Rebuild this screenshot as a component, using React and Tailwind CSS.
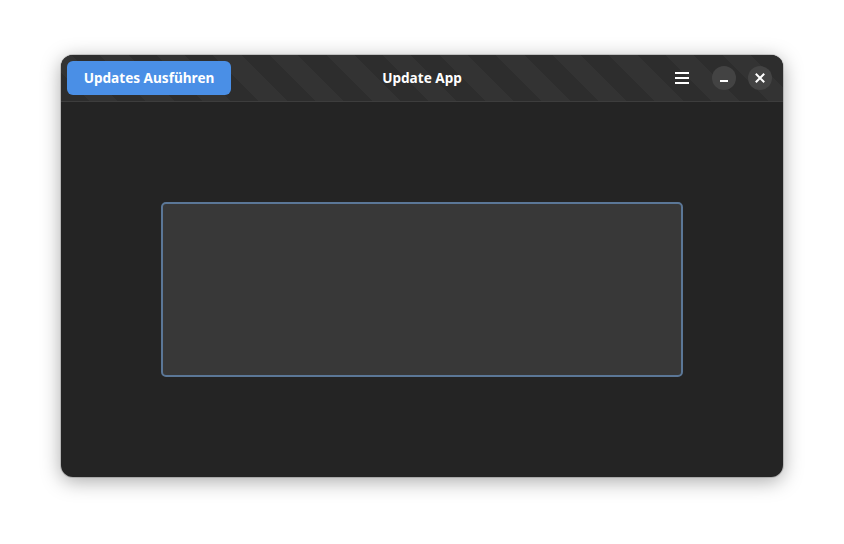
export default function App() {
  return (
    <div className="w-[844px] h-[544px] bg-white pt-[55px] pl-[61px]" style={{ fontFamily: '"Noto Sans", sans-serif' }}>
      <div className="w-[722px] h-[422px] rounded-[12px] overflow-hidden bg-[#242424] flex flex-col shadow-[0_4px_20px_rgba(0,0,0,0.35),0_0_0_1px_rgba(0,0,0,0.15)]">
        <div className="h-[47px] shrink-0 flex items-center px-[6px] border-b border-[#3d3d3d] bg-[#2e2e2e] bg-[repeating-linear-gradient(45deg,#2d2d2d_0px,#2d2d2d_20px,#333333_20px,#333333_40px)] relative">
          <button className="h-[34px] w-[164px] rounded-[6px] bg-[#4a8fe6] text-white text-[13.6px] font-bold flex items-center justify-center">
            Updates Ausführen
          </button>
          <div className="absolute left-0 right-0 top-0 bottom-0 flex items-center justify-center pointer-events-none">
            <span className="text-white text-[13.6px] font-bold">Update App</span>
          </div>
          <div className="ml-auto flex items-center relative">
            <div className="w-[34px] h-[34px] flex items-center justify-center mr-[7px]">
              <svg width="16" height="16" viewBox="0 0 16 16">
                <rect x="1" y="2" width="14" height="2" fill="#fff" />
                <rect x="1" y="7" width="14" height="2" fill="#fff" />
                <rect x="1" y="12" width="14" height="2" fill="#fff" />
              </svg>
            </div>
            <div className="w-[24px] h-[24px] rounded-full bg-[#434343] flex items-center justify-center mx-[6px]">
              <svg width="10" height="10" viewBox="0 0 10 10">
                <rect x="1" y="7" width="8" height="2" fill="#fff" />
              </svg>
            </div>
            <div className="w-[24px] h-[24px] rounded-full bg-[#434343] flex items-center justify-center ml-[6px] mr-[5px]">
              <svg width="10" height="10" viewBox="0 0 10 10">
                <path d="M1.5 1.5 L8.5 8.5 M8.5 1.5 L1.5 8.5" stroke="#fff" strokeWidth="2" strokeLinecap="square" />
              </svg>
            </div>
          </div>
        </div>
        <div className="flex-1 flex items-center justify-center">
          <div className="w-[522px] h-[175px] rounded-[5px] border-2 border-[#5b7797] bg-[#383838]"></div>
        </div>
      </div>
    </div>
  );
}
